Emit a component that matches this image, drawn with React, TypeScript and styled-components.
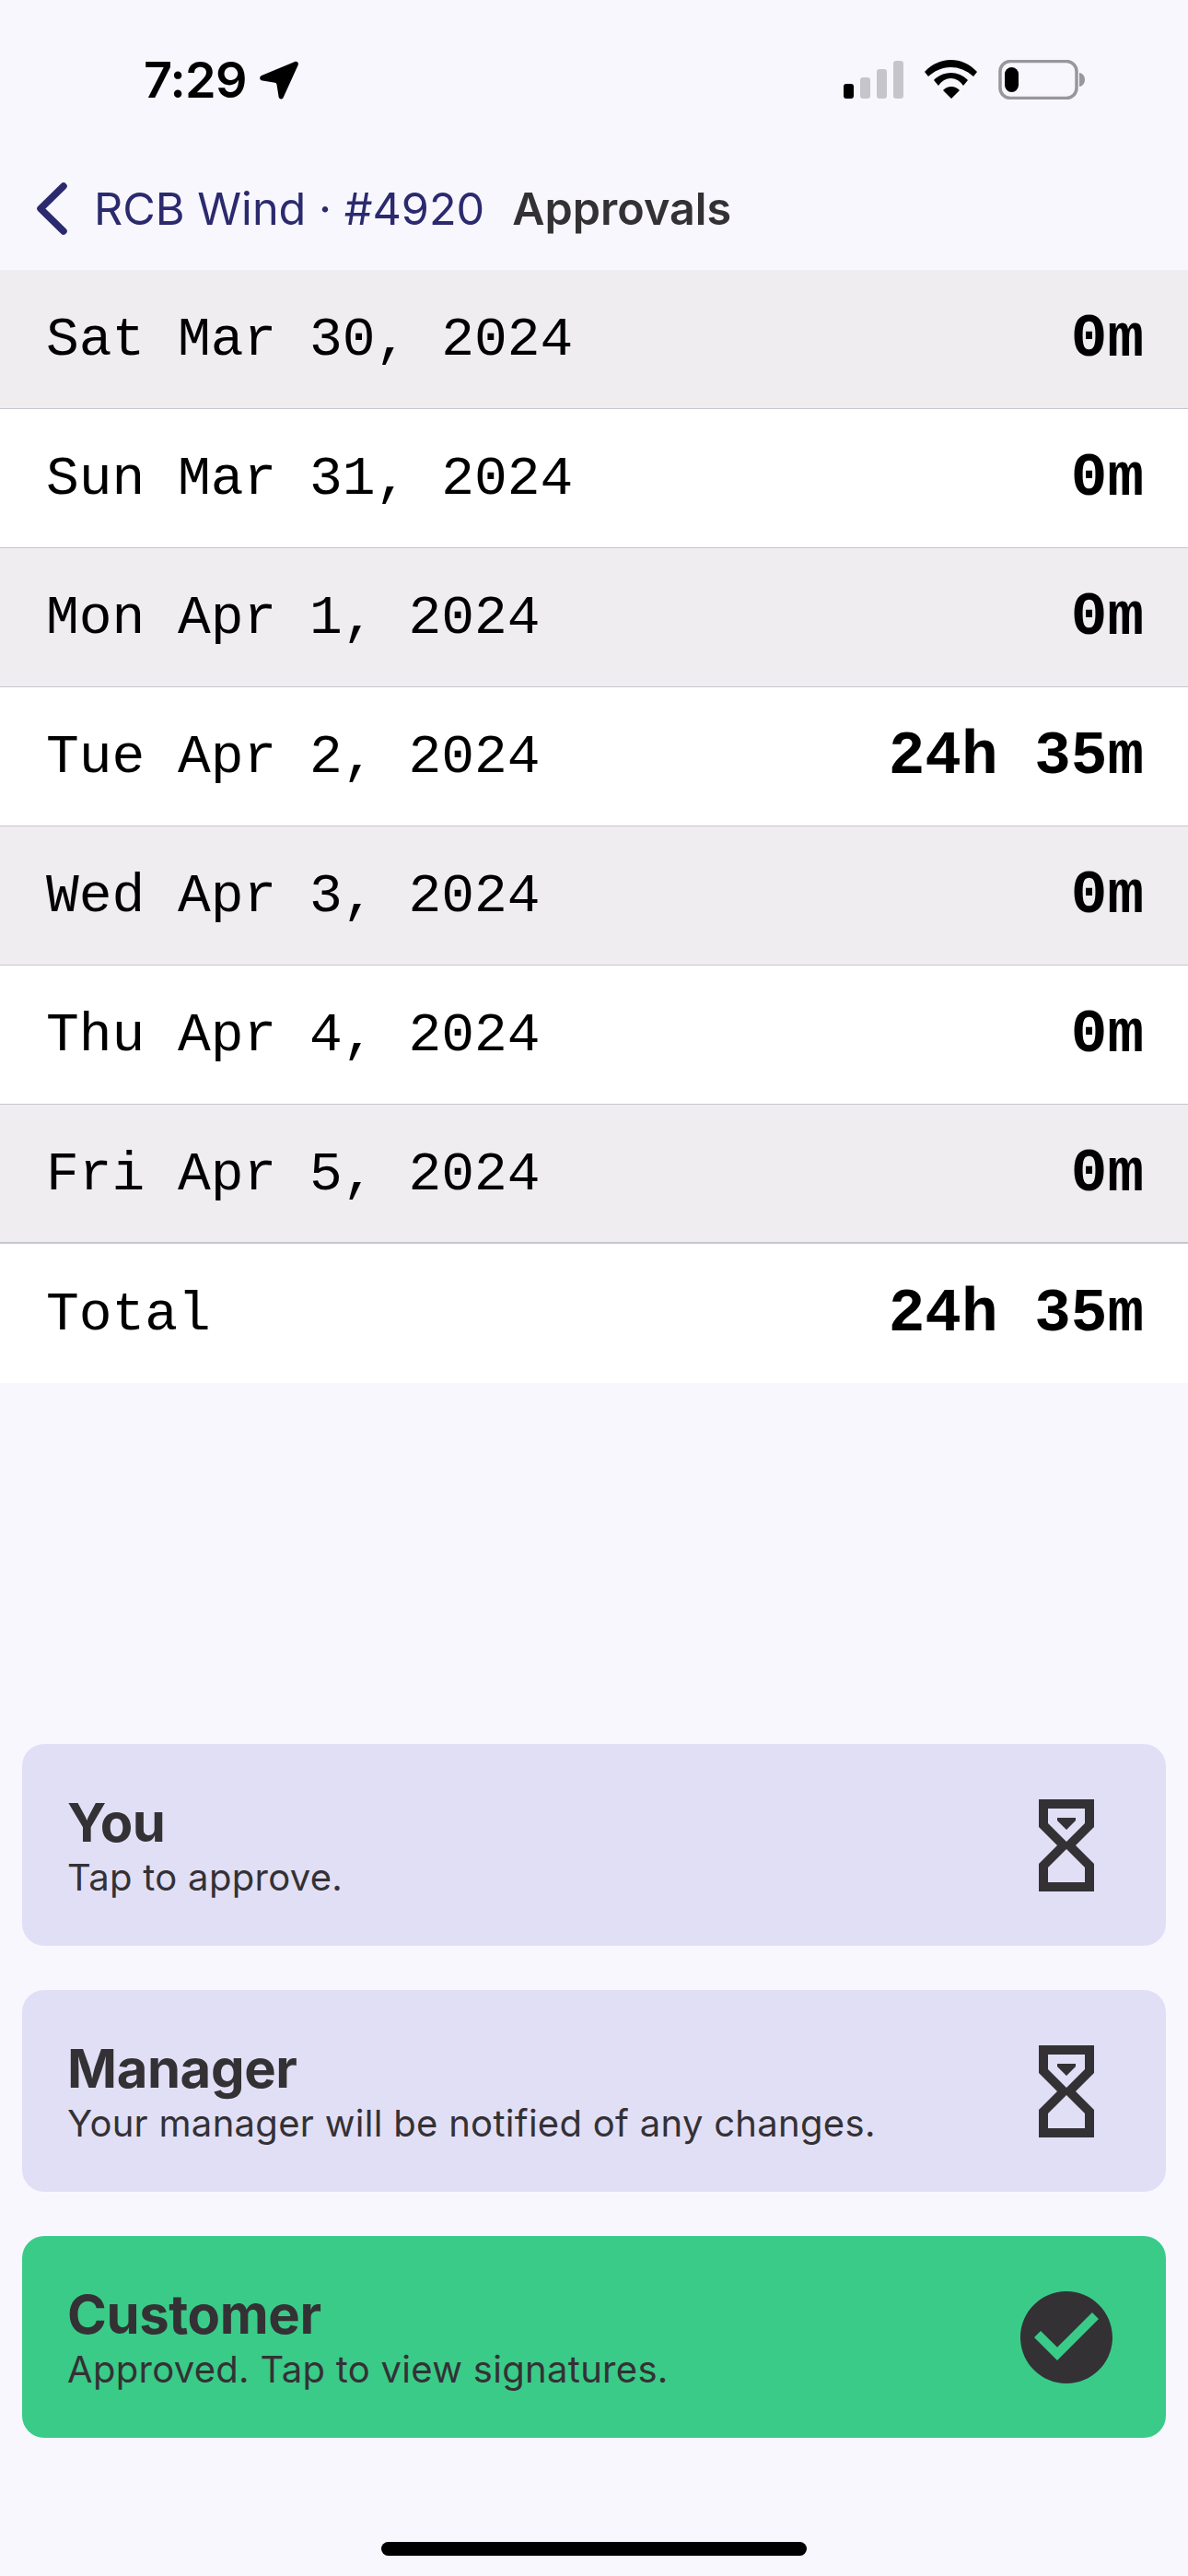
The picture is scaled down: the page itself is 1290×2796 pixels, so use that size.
import React from 'react';
import styled, { createGlobalStyle } from 'styled-components';

const GlobalStyle = createGlobalStyle`
  html, body {
    margin: 0;
    padding: 0;
    background: #f8f7fe;
  }
  * {
    box-sizing: border-box;
  }
`;

const Screen = styled.div`
  width: 1290px;
  height: 2796px;
  display: flex;
  flex-direction: column;
  overflow: hidden;
  background: #f8f7fe;
  font-family: Inter, 'Liberation Sans', sans-serif;
  color: #343135;
`;

const StatusBar = styled.div`
  height: 126px;
  flex: none;
  display: flex;
  justify-content: space-between;
  align-items: flex-start;
  padding: 54px 112px 0 156px;
  color: #000;
`;

const StatusLeft = styled.div`
  display: flex;
  align-items: center;
  gap: 14px;
`;

const Clock = styled.span`
  font-size: 54px;
  line-height: 66px;
  font-weight: 600;
  letter-spacing: -0.7px;
`;

const StatusRight = styled.div`
  display: flex;
  align-items: flex-start;
  gap: 23px;
  padding-top: 11px;
`;

const NavBar = styled.div`
  height: 167px;
  flex: none;
  display: flex;
  align-items: center;
  padding: 34px 0 0 40px;
`;

const BackLink = styled.span`
  margin-left: 29px;
  font-size: 48.600px;
  line-height: 60px;
  font-weight: 400;
  color: #2b2a6e;
`;

const NavTitle = styled.span`
  margin-left: 30px;
  font-size: 48.500px;
  line-height: 60px;
  font-weight: 600;
  color: #343135;
`;

const Table = styled.div`
  flex: none;
  display: flex;
  flex-direction: column;
`;

const Row = styled.div<{ $shaded: boolean; $rule: number }>`
  height: 151px;
  display: flex;
  align-items: center;
  justify-content: space-between;
  padding: 2px 48px 0 50px;
  background: ${({ $shaded }) => ($shaded ? '#efedf0' : '#ffffff')};
  border-bottom: ${({ $rule }) => $rule}px solid #c8c6ce;
  font-family: 'Liberation Mono', monospace;
  color: #000;
`;

const DayLabel = styled.span`
  font-size: 59.600px;
  line-height: 70px;
`;

const Duration = styled.span`
  font-size: 66px;
  line-height: 70px;
  font-weight: 700;
`;

const Approvals = styled.div`
  margin-top: auto;
  display: flex;
  flex-direction: column;
  gap: 48px;
  padding: 0 24px;
`;

const ApprovalCard = styled.div<{ $approved: boolean }>`
  height: 219px;
  display: flex;
  align-items: center;
  justify-content: space-between;
  padding: 0 58px 0 49px;
  border-radius: 24px;
  background: ${({ $approved }) => ($approved ? '#3acb88' : '#e1dff6')};
`;

const CardText = styled.div`
  display: flex;
  flex-direction: column;
`;

const CardTitle = styled.span`
  font-size: 58px;
  line-height: 70px;
  font-weight: 700;
  letter-spacing: -0.4px;
`;

const CardSubtitle = styled.span`
  font-size: 40px;
  line-height: 50px;
  font-weight: 400;
  letter-spacing: 0.3px;
`;

const CardIcon = styled.div`
  width: 100px;
  height: 100px;
  display: flex;
  align-items: center;
  justify-content: center;
`;

const HomeBar = styled.div`
  flex: none;
  height: 150px;
  display: flex;
  align-items: flex-end;
  justify-content: center;
  padding-bottom: 22px;
`;

const HomeIndicator = styled.div`
  width: 462px;
  height: 15px;
  border-radius: 8px;
  background: #000;
`;

const LocationArrow = () => (
  <svg width="42" height="42" viewBox="0 0 42 42">
    <path
      d="M37.500 1.200C40.500-.1 42.700 1.800 41.600 4.700L25.800 39.500C24.500 42.500 21 42 20.600 39L18.500 25.700C18.300 24.600 17.600 24 16.500 23.800L3 21.500C-.2 21-.9 17.500 2 16Z"
      fill="#000"
    />
  </svg>
);

const SignalIcon = () => (
  <svg width="65" height="42" viewBox="0 0 65 42">
    <rect x="0" y="26" width="11" height="16" rx="3" fill="#000" />
    <rect x="18" y="19" width="11" height="23" rx="3" fill="#c6c5cb" />
    <rect x="36" y="10" width="11" height="32" rx="3" fill="#c6c5cb" />
    <rect x="54" y="1" width="11" height="41" rx="3" fill="#c6c5cb" />
  </svg>
);

const WifiIcon = () => (
  <svg width="57" height="42" viewBox="0 0 57 42">
    <path
      d="M0 13C16-4.300 41-4.300 57 13L53 18C38 4.700 19 4.700 4 18Z M10 22C20 11.300 37 11.300 47 22L42 28C35 17.300 22 17.300 15 28Z M20 33C25 27.700 33 27.700 38 33L29 42Z"
      fill="#000"
    />
  </svg>
);

const BatteryIcon = () => (
  <svg width="94" height="43" viewBox="0 0 94 43">
    <rect x="2" y="1.500" width="83" height="40" rx="11" fill="none" stroke="#98979c" strokeWidth="3.500" />
    <rect x="7" y="8" width="15" height="27" rx="7.500" fill="#000" />
    <path d="M88 14c3.500.6 6 3.500 6 7.500s-2.500 6.900-6 7.500Z" fill="#98979c" />
  </svg>
);

const BackChevron = () => (
  <svg width="33" height="57" viewBox="0 0 33 57">
    <path d="M29 4 4 28.500 29 53" fill="none" stroke="#2b2a6e" strokeWidth="7.500" strokeLinecap="round" strokeLinejoin="round" />
  </svg>
);

const HourglassIcon = () => (
  <svg width="60" height="100" viewBox="6 2 12 20">
    <path
      fillRule="evenodd"
      d="M6 2H18V8L14 12L18 16V22H6V16L10 12L6 8ZM8 4V7.200L12 11.200L16 7.200V4ZM8 20H16V16.800L12 12.800L8 16.800ZM10 6H14V6.600L12 8.600L10 6.600Z"
      fill="#343135"
    />
  </svg>
);

const ApprovedIcon = () => (
  <svg width="100" height="100" viewBox="2 2 20 20">
    <path
      d="M12 2C6.480 2 2 6.480 2 12s4.480 10 10 10 10-4.480 10-10S17.520 2 12 2zm-2 15l-5-5 1.410-1.410L10 14.170l7.590-7.590L19 8l-9 9z"
      fill="#343135"
    />
  </svg>
);

const days = [
  { label: 'Sat Mar 30, 2024', total: '0m', rule: 1 },
  { label: 'Sun Mar 31, 2024', total: '0m', rule: 1 },
  { label: 'Mon Apr 1, 2024', total: '0m', rule: 1 },
  { label: 'Tue Apr 2, 2024', total: '24h 35m', rule: 1 },
  { label: 'Wed Apr 3, 2024', total: '0m', rule: 1 },
  { label: 'Thu Apr 4, 2024', total: '0m', rule: 1 },
  { label: 'Fri Apr 5, 2024', total: '0m', rule: 2 },
  { label: 'Total', total: '24h 35m', rule: 0 },
];

const approvals = [
  { title: 'You', subtitle: 'Tap to approve.', approved: false },
  { title: 'Manager', subtitle: 'Your manager will be notified of any changes.', approved: false },
  { title: 'Customer', subtitle: 'Approved. Tap to view signatures.', approved: true },
];

const App: React.FC = () => (
  <Screen>
    <GlobalStyle />
    <StatusBar>
      <StatusLeft>
        <Clock>7:29</Clock>
        <LocationArrow />
      </StatusLeft>
      <StatusRight>
        <SignalIcon />
        <WifiIcon />
        <BatteryIcon />
      </StatusRight>
    </StatusBar>
    <NavBar>
      <BackChevron />
      <BackLink>RCB Wind · #4920</BackLink>
      <NavTitle>Approvals</NavTitle>
    </NavBar>
    <Table>
      {days.map((day, index) => (
        <Row key={day.label} $shaded={index % 2 === 0} $rule={day.rule}>
          <DayLabel>{day.label}</DayLabel>
          <Duration>{day.total}</Duration>
        </Row>
      ))}
    </Table>
    <Approvals>
      {approvals.map((item) => (
        <ApprovalCard key={item.title} $approved={item.approved}>
          <CardText>
            <CardTitle>{item.title}</CardTitle>
            <CardSubtitle>{item.subtitle}</CardSubtitle>
          </CardText>
          <CardIcon>{item.approved ? <ApprovedIcon /> : <HourglassIcon />}</CardIcon>
        </ApprovalCard>
      ))}
    </Approvals>
    <HomeBar>
      <HomeIndicator />
    </HomeBar>
  </Screen>
);

export default App;
